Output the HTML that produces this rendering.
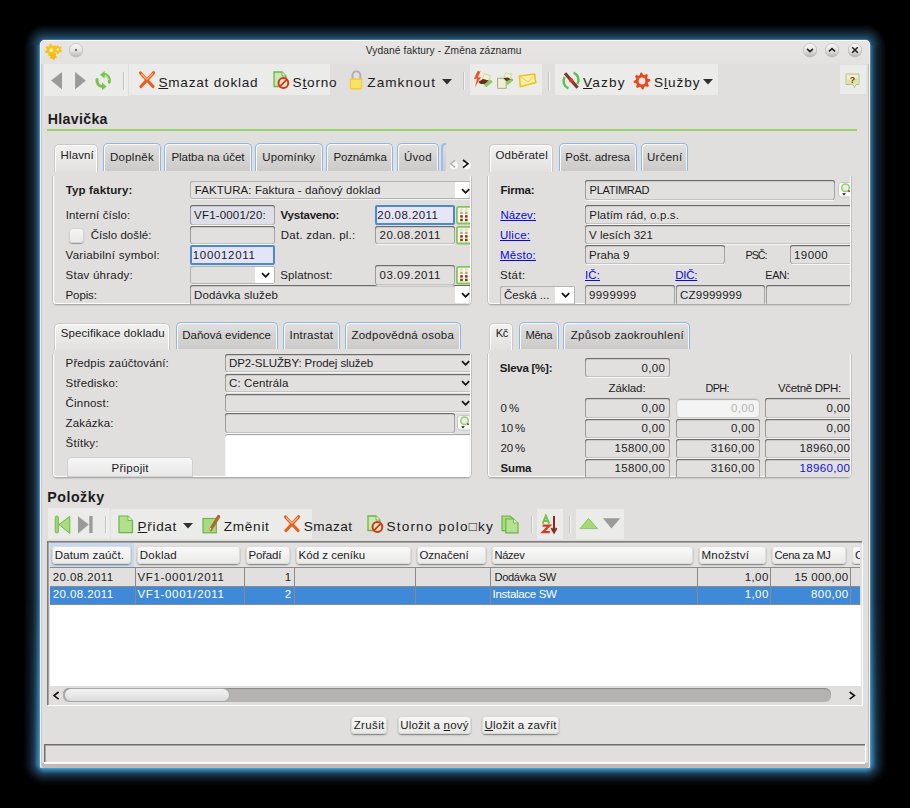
<!DOCTYPE html>
<html><head><meta charset="utf-8"><style>
html,body{margin:0;padding:0;}
body{width:910px;height:808px;background:#000;position:relative;overflow:hidden;font-family:"Liberation Sans",sans-serif;color:#1c1c1c;}
.t{position:absolute;white-space:nowrap;line-height:1;font-family:"Liberation Sans",sans-serif;}
.b{position:absolute;}
svg{position:absolute;overflow:visible;}
</style></head><body>

<div class="b" style="left:45px;top:24px;width:820px;height:16px;background:linear-gradient(to top,#28587a 0px, #1e4058 3px, #122838 7px, #0c1820 10px, #04060a 14px, #000 15.5px);"></div>
<div class="b" style="left:45px;top:768px;width:820px;height:18px;background:linear-gradient(to bottom,#4a9ac8 0px, #2e6a90 3px, #1a3a50 6px, #101c28 10px, #060a10 14px, #000 17.5px);"></div>
<div class="b" style="left:24px;top:45px;width:16px;height:718px;background:linear-gradient(to left,#3a82aa 0px, #2a6080 1.5px, #1c3a50 4px, #14202c 7px, #0d1520 10px, #05080c 14.5px, #000 16px);"></div>
<div class="b" style="left:24px;top:600px;width:16px;height:163px;background:linear-gradient(to left,#4a9ac8 0px, #2e6a90 3px, #1a3a50 6px, #101c28 10px, #060a10 14px, #000 17.5px);-webkit-mask-image:linear-gradient(transparent,#000);"></div>
<div class="b" style="left:870px;top:45px;width:16px;height:718px;background:linear-gradient(to right,#3a82aa 0px, #2a6080 1.5px, #1c3a50 4px, #14202c 7px, #0d1520 10px, #05080c 14.5px, #000 16px);"></div>
<div class="b" style="left:870px;top:600px;width:16px;height:163px;background:linear-gradient(to right,#4a9ac8 0px, #2e6a90 3px, #1a3a50 6px, #101c28 10px, #060a10 14px, #000 17.5px);-webkit-mask-image:linear-gradient(transparent,#000);"></div>
<div class="b" style="left:24px;top:24px;width:21px;height:21px;background:radial-gradient(circle 21px at 100% 100%,#28587a 5.0px, #1e4058 8.0px, #122838 12.0px, #0c1820 15.0px, #04060a 19.0px, #000 20.5px);"></div>
<div class="b" style="left:865px;top:24px;width:21px;height:21px;background:radial-gradient(circle 21px at 0% 100%,#28587a 5.0px, #1e4058 8.0px, #122838 12.0px, #0c1820 15.0px, #04060a 19.0px, #000 20.5px);"></div>
<div class="b" style="left:22px;top:763px;width:23px;height:23px;background:radial-gradient(circle 23px at 100% 0%,#4a9ac8 5.0px, #2e6a90 8.0px, #1a3a50 11.0px, #101c28 15.0px, #060a10 19.0px, #000 22.5px);"></div>
<div class="b" style="left:865px;top:763px;width:23px;height:23px;background:radial-gradient(circle 23px at 0% 0%,#4a9ac8 5.0px, #2e6a90 8.0px, #1a3a50 11.0px, #101c28 15.0px, #060a10 19.0px, #000 22.5px);"></div>
<div class="b" style="left:40px;top:40px;width:830px;height:728px;background:#e0dfde;border-radius:5px 5px 2px 2px;box-shadow:inset 0 1px 0 #fbfbfb, inset 1px 0 0 #f4f2f0, inset 2px 0 0 #cdc6c2, inset -1px 0 0 #f0eeec, inset -2px 0 0 #c8c0bc, 0 0 0.5px 1px rgba(80,160,210,.45);"></div>
<div class="b" style="left:42px;top:763px;width:826px;height:5px;background:#c2bab6;border-radius:0 0 2px 2px;"></div>
<div class="b" style="left:41px;top:41px;width:828px;height:23px;background:linear-gradient(#e6e5e3,#e3e2e0);border-radius:4px 4px 0 0;"></div>
<div class="t" style="left:365.70px;top:46px;font-size:10.2px;letter-spacing:0.111px;color:#2a2a2a;">Vydané faktury - Změna záznamu</div>
<div class="b" style="left:44px;top:64px;width:84px;height:32px;background:#ebebea;"></div>
<div class="b" style="left:129px;top:64px;width:201px;height:31px;background:#ebebea;"></div>
<div class="b" style="left:470px;top:64px;width:72px;height:31px;background:#ebebea;"></div>
<div class="b" style="left:555px;top:64px;width:163px;height:31px;background:#ebebea;"></div>
<div class="b" style="left:840px;top:65px;width:26px;height:29px;background:#ebebea;"></div>
<div class="b" style="left:123px;top:72px;width:1px;height:18px;background:#c4c3c2;box-shadow:1px 0 0 #f4f4f4;"></div>
<div class="b" style="left:463px;top:72px;width:1px;height:18px;background:#c4c3c2;box-shadow:1px 0 0 #f4f4f4;"></div>
<div class="b" style="left:548px;top:72px;width:1px;height:18px;background:#c4c3c2;box-shadow:1px 0 0 #f4f4f4;"></div>
<div class="t" style="left:158.40px;top:76px;font-size:13.6px;letter-spacing:0.778px;"><u>S</u>mazat doklad</div>
<div class="t" style="left:292.60px;top:76px;font-size:13.6px;letter-spacing:0.790px;">S<u>t</u>orno</div>
<div class="t" style="left:367.30px;top:76px;font-size:13.6px;letter-spacing:1.035px;">Zamknout</div>
<div class="t" style="left:583.00px;top:76px;font-size:13.6px;letter-spacing:1.203px;"><u>V</u>azby</div>
<div class="t" style="left:654.00px;top:76px;font-size:13.6px;letter-spacing:0.960px;">S<u>l</u>užby</div>
<div class="t" style="left:47.70px;top:112px;font-size:14.2px;font-weight:bold;letter-spacing:0.315px;">Hlavička</div>
<div class="b" style="left:47px;top:129px;width:810px;height:2px;background:#98d070;"></div>
<div class="b" style="left:53px;top:176px;width:418px;height:128px;border-radius:0 0 4px 4px;box-shadow:inset 1px 0 0 #fdfdfd, inset -1px 0 0 #fdfdfd, inset 0 -1px 0 #fdfdfd, -1px 0 0 #c2c1c0, 1px 0 0 #c2c1c0, 0 1px 0 #aeadac, 0 2px 1px rgba(0,0,0,.10);"></div>
<div class="b" style="left:54px;top:144px;width:44px;height:28px;background:linear-gradient(#f2f2f1,#e2e1e0);border:1px solid #c9c8c7;border-bottom:none;border-radius:5px 5px 0 0;box-shadow:inset 1px 1px 0 #fff,inset -1px 0 0 #fff;box-sizing:border-box;"></div>
<div class="t" style="left:60.50px;top:150px;font-size:11.5px;letter-spacing:0.139px;">Hlavní</div>
<div class="b" style="left:102.5px;top:142.5px;width:58.0px;height:28.5px;background:linear-gradient(#e2e1e0,#d6d5d4 45%,#cccbca);border:1.8px solid #88b8ec;border-bottom:none;border-radius:5px 5px 0 0;box-sizing:border-box;box-shadow:inset 1px 1px 0 #fafafa, inset -1px 0 0 #f4f4f4;"></div>
<div class="t" style="left:110.00px;top:152px;font-size:11.5px;letter-spacing:0.256px;">Doplněk</div>
<div class="b" style="left:163.5px;top:142.5px;width:88.0px;height:28.5px;background:linear-gradient(#e2e1e0,#d6d5d4 45%,#cccbca);border:1.8px solid #88b8ec;border-bottom:none;border-radius:5px 5px 0 0;box-sizing:border-box;box-shadow:inset 1px 1px 0 #fafafa, inset -1px 0 0 #f4f4f4;"></div>
<div class="t" style="left:171.40px;top:152px;font-size:11.5px;letter-spacing:-0.034px;">Platba na účet</div>
<div class="b" style="left:254.5px;top:142.5px;width:68.0px;height:28.5px;background:linear-gradient(#e2e1e0,#d6d5d4 45%,#cccbca);border:1.8px solid #88b8ec;border-bottom:none;border-radius:5px 5px 0 0;box-sizing:border-box;box-shadow:inset 1px 1px 0 #fafafa, inset -1px 0 0 #f4f4f4;"></div>
<div class="t" style="left:262.30px;top:152px;font-size:11.5px;letter-spacing:0.150px;">Upomínky</div>
<div class="b" style="left:325.5px;top:142.5px;width:67.0px;height:28.5px;background:linear-gradient(#e2e1e0,#d6d5d4 45%,#cccbca);border:1.8px solid #88b8ec;border-bottom:none;border-radius:5px 5px 0 0;box-sizing:border-box;box-shadow:inset 1px 1px 0 #fafafa, inset -1px 0 0 #f4f4f4;"></div>
<div class="t" style="left:333.40px;top:152px;font-size:11.5px;letter-spacing:-0.128px;">Poznámka</div>
<div class="b" style="left:396.5px;top:142.5px;width:42.0px;height:28.5px;background:linear-gradient(#e2e1e0,#d6d5d4 45%,#cccbca);border:1.8px solid #88b8ec;border-bottom:none;border-radius:5px 5px 0 0;box-sizing:border-box;box-shadow:inset 1px 1px 0 #fafafa, inset -1px 0 0 #f4f4f4;"></div>
<div class="t" style="left:404.00px;top:152px;font-size:11.5px;letter-spacing:0.282px;">Úvod</div>
<div class="b" style="left:441px;top:143px;width:5px;height:28px;background:linear-gradient(#dddcdb,#cfcecd);border-left:2px solid #94bfee;border-top:2px solid #94bfee;border-radius:4px 0 0 0;box-sizing:border-box;"></div>
<div class="t" style="left:65.70px;top:185px;font-size:11.5px;font-weight:bold;letter-spacing:0.157px;">Typ faktury:</div>
<div class="t" style="left:65.70px;top:210px;font-size:11.5px;letter-spacing:0.152px;">Interní číslo:</div>
<div class="t" style="left:90.70px;top:230px;font-size:11.5px;letter-spacing:0.056px;">Číslo došlé:</div>
<div class="t" style="left:65.60px;top:250px;font-size:11.5px;letter-spacing:0.251px;">Variabilní symbol:</div>
<div class="t" style="left:65.60px;top:270px;font-size:11.5px;letter-spacing:0.230px;">Stav úhrady:</div>
<div class="t" style="left:65.60px;top:290px;font-size:11.5px;letter-spacing:-0.140px;">Popis:</div>
<div class="t" style="left:280.60px;top:210px;font-size:11.5px;font-weight:bold;letter-spacing:-0.239px;">Vystaveno:</div>
<div class="t" style="left:280.80px;top:230px;font-size:11.5px;letter-spacing:0.247px;">Dat. zdan. pl.:</div>
<div class="t" style="left:280.20px;top:270px;font-size:11.5px;letter-spacing:0.120px;">Splatnost:</div>
<div class="b" style="left:190px;top:181px;width:280px;height:19px;overflow:hidden;"><div class="b" style="left:0;top:0;width:284px;height:18px;background:#e3e2e1;border-radius:3px;box-shadow:inset 0 0 0 1px #b4b3b2, inset 0 1px 0 #a0a09f, 0 1px 0 rgba(255,255,255,.6);"></div></div>
<div class="b" style="left:455px;top:182px;width:14px;height:16px;background:#fff;"></div>
<div class="t" style="left:194.70px;top:185px;font-size:11.5px;letter-spacing:0.091px;">FAKTURA: Faktura - daňový doklad</div>
<div class="b" style="left:190px;top:205px;width:85px;height:21px;overflow:hidden;"><div class="b" style="left:0;top:0;width:85px;height:20px;background:#dfdfea;border-radius:3px;box-shadow:inset 0 1px 0 #6c6c6c, inset 0 2px 0 rgba(0,0,0,.10), inset 1px 0 0 #9c9c9c, inset -1px 0 0 #a4a4a4, inset 0 -1px 0 #c4c4c4, 0 1px 0 rgba(255,255,255,.75);"></div></div>
<div class="t" style="left:194.10px;top:210px;font-size:11.5px;letter-spacing:0.169px;">VF1-0001/20:</div>
<div class="b" style="left:190px;top:226px;width:85px;height:19px;overflow:hidden;"><div class="b" style="left:0;top:0;width:85px;height:18px;background:#e1e0df;border-radius:3px;box-shadow:inset 0 1px 0 #6c6c6c, inset 0 2px 0 rgba(0,0,0,.10), inset 1px 0 0 #9c9c9c, inset -1px 0 0 #a4a4a4, inset 0 -1px 0 #c4c4c4, 0 1px 0 rgba(255,255,255,.75);"></div></div>
<div class="b" style="left:190px;top:245px;width:85px;height:20px;background:#e4e4f6;border:2px solid #4a8ad0;border-radius:2px;box-sizing:border-box;"></div>
<div class="t" style="left:192.80px;top:250px;font-size:11.5px;letter-spacing:0.663px;">100012011</div>
<div class="b" style="left:190px;top:266px;width:85px;height:19px;overflow:hidden;"><div class="b" style="left:0;top:0;width:85px;height:18px;background:#e1e0df;border-radius:3px;box-shadow:inset 0 0 0 1px #b4b3b2, inset 0 1px 0 #a0a09f, 0 1px 0 rgba(255,255,255,.6);"></div></div>
<div class="b" style="left:255px;top:267px;width:19px;height:16px;background:#fff;"></div>
<div class="b" style="left:190px;top:285px;width:280px;height:19px;overflow:hidden;"><div class="b" style="left:0;top:0;width:284px;height:22px;background:#e1e0df;border-radius:3px;box-shadow:inset 0 1px 0 #6c6c6c, inset 0 2px 0 rgba(0,0,0,.10), inset 1px 0 0 #9c9c9c, inset -1px 0 0 #a4a4a4, inset 0 -1px 0 #c4c4c4, 0 1px 0 rgba(255,255,255,.75);"></div></div>
<div class="b" style="left:455px;top:286px;width:14px;height:17px;background:#fff;"></div>
<div class="t" style="left:194.00px;top:290px;font-size:11.5px;letter-spacing:0.164px;">Dodávka služeb</div>
<div class="b" style="left:375px;top:205px;width:80px;height:20px;background:#e6e6f8;border:2px solid #4a8ad0;border-radius:2px;box-sizing:border-box;"></div>
<div class="t" style="left:377.30px;top:210px;font-size:11.5px;letter-spacing:0.445px;">20.08.2011</div>
<div class="b" style="left:375px;top:226px;width:80px;height:19px;overflow:hidden;"><div class="b" style="left:0;top:0;width:80px;height:18px;background:#e1e0df;border-radius:3px;box-shadow:inset 0 1px 0 #6c6c6c, inset 0 2px 0 rgba(0,0,0,.10), inset 1px 0 0 #9c9c9c, inset -1px 0 0 #a4a4a4, inset 0 -1px 0 #c4c4c4, 0 1px 0 rgba(255,255,255,.75);"></div></div>
<div class="t" style="left:379.60px;top:230px;font-size:11.5px;letter-spacing:0.445px;">20.08.2011</div>
<div class="b" style="left:375px;top:265px;width:80px;height:21px;overflow:hidden;"><div class="b" style="left:0;top:0;width:80px;height:20px;background:#e1e0df;border-radius:3px;box-shadow:inset 0 1px 0 #6c6c6c, inset 0 2px 0 rgba(0,0,0,.10), inset 1px 0 0 #9c9c9c, inset -1px 0 0 #a4a4a4, inset 0 -1px 0 #c4c4c4, 0 1px 0 rgba(255,255,255,.75);"></div></div>
<div class="t" style="left:379.60px;top:270px;font-size:11.5px;letter-spacing:0.445px;">03.09.2011</div>
<div class="b" style="left:69px;top:228px;width:15px;height:15px;background:linear-gradient(#f6f6f6,#e8e8e8);border-radius:4px;box-shadow:0 1px 1px rgba(0,0,0,.35), inset 0 0 0 1px #d4d4d4;"></div>
<div class="b" style="left:488px;top:176px;width:363px;height:128px;border-radius:0 0 4px 4px;box-shadow:inset 1px 0 0 #fdfdfd, inset -1px 0 0 #fdfdfd, inset 0 -1px 0 #fdfdfd, -1px 0 0 #c2c1c0, 1px 0 0 #c2c1c0, 0 1px 0 #aeadac, 0 2px 1px rgba(0,0,0,.10);"></div>
<div class="b" style="left:489px;top:144px;width:64px;height:28px;background:linear-gradient(#f2f2f1,#e2e1e0);border:1px solid #c9c8c7;border-bottom:none;border-radius:5px 5px 0 0;box-shadow:inset 1px 1px 0 #fff,inset -1px 0 0 #fff;box-sizing:border-box;"></div>
<div class="t" style="left:495.40px;top:150px;font-size:11.5px;letter-spacing:0.227px;">Odběratel</div>
<div class="b" style="left:558.5px;top:142.5px;width:78.0px;height:28.5px;background:linear-gradient(#e2e1e0,#d6d5d4 45%,#cccbca);border:1.8px solid #88b8ec;border-bottom:none;border-radius:5px 5px 0 0;box-sizing:border-box;box-shadow:inset 1px 1px 0 #fafafa, inset -1px 0 0 #f4f4f4;"></div>
<div class="t" style="left:565.30px;top:152px;font-size:11.5px;">Pošt. adresa</div>
<div class="b" style="left:640.5px;top:142.5px;width:47.0px;height:28.5px;background:linear-gradient(#e2e1e0,#d6d5d4 45%,#cccbca);border:1.8px solid #88b8ec;border-bottom:none;border-radius:5px 5px 0 0;box-sizing:border-box;box-shadow:inset 1px 1px 0 #fafafa, inset -1px 0 0 #f4f4f4;"></div>
<div class="t" style="left:647.00px;top:152px;font-size:11.5px;letter-spacing:0.267px;">Určení</div>
<div class="t" style="left:500.40px;top:185px;font-size:11.5px;font-weight:bold;letter-spacing:-0.206px;">Firma:</div>
<div class="t" style="left:500.40px;top:210px;font-size:11.5px;letter-spacing:-0.033px;color:#0a0ad8;"><u>Název:</u></div>
<div class="t" style="left:500.00px;top:230px;font-size:11.5px;letter-spacing:0.250px;color:#0a0ad8;"><u>Ulice:</u></div>
<div class="t" style="left:500.00px;top:250px;font-size:11.5px;letter-spacing:0.240px;color:#0a0ad8;"><u>Město:</u></div>
<div class="t" style="left:500.00px;top:270px;font-size:11.5px;letter-spacing:0.372px;">Stát:</div>
<div class="t" style="left:585.00px;top:270px;font-size:11.5px;letter-spacing:0.090px;color:#0a0ad8;"><u>IČ:</u></div>
<div class="t" style="left:675.30px;top:270px;font-size:11.5px;letter-spacing:-0.247px;color:#0a0ad8;"><u>DIČ:</u></div>
<div class="t" style="left:765.30px;top:270px;font-size:10.8px;letter-spacing:-0.339px;">EAN:</div>
<div class="t" style="left:745.50px;top:250px;font-size:10.8px;letter-spacing:-1.073px;">PSČ:</div>
<div class="b" style="left:585px;top:180px;width:250px;height:20.5px;overflow:hidden;"><div class="b" style="left:0;top:0;width:250px;height:19.5px;background:#e1e0df;border-radius:3px;box-shadow:inset 0 1px 0 #6c6c6c, inset 0 2px 0 rgba(0,0,0,.10), inset 1px 0 0 #9c9c9c, inset -1px 0 0 #a4a4a4, inset 0 -1px 0 #c4c4c4, 0 1px 0 rgba(255,255,255,.75);"></div></div>
<div class="t" style="left:589.60px;top:185px;font-size:11.1px;letter-spacing:-0.339px;">PLATIMRAD</div>
<div class="b" style="left:585px;top:205px;width:265px;height:20px;overflow:hidden;"><div class="b" style="left:0;top:0;width:269px;height:19px;background:#e1e0df;border-radius:3px;box-shadow:inset 0 1px 0 #6c6c6c, inset 0 2px 0 rgba(0,0,0,.10), inset 1px 0 0 #9c9c9c, inset -1px 0 0 #a4a4a4, inset 0 -1px 0 #c4c4c4, 0 1px 0 rgba(255,255,255,.75);"></div></div>
<div class="t" style="left:589.30px;top:210px;font-size:11.5px;letter-spacing:0.158px;">Platím rád, o.p.s.</div>
<div class="b" style="left:585px;top:225px;width:265px;height:20px;overflow:hidden;"><div class="b" style="left:0;top:0;width:269px;height:19px;background:#e1e0df;border-radius:3px;box-shadow:inset 0 1px 0 #6c6c6c, inset 0 2px 0 rgba(0,0,0,.10), inset 1px 0 0 #9c9c9c, inset -1px 0 0 #a4a4a4, inset 0 -1px 0 #c4c4c4, 0 1px 0 rgba(255,255,255,.75);"></div></div>
<div class="t" style="left:588.90px;top:230px;font-size:11.5px;letter-spacing:0.072px;">V lesích 321</div>
<div class="b" style="left:585px;top:245px;width:140px;height:20px;overflow:hidden;"><div class="b" style="left:0;top:0;width:140px;height:19px;background:#e1e0df;border-radius:3px;box-shadow:inset 0 1px 0 #6c6c6c, inset 0 2px 0 rgba(0,0,0,.10), inset 1px 0 0 #9c9c9c, inset -1px 0 0 #a4a4a4, inset 0 -1px 0 #c4c4c4, 0 1px 0 rgba(255,255,255,.75);"></div></div>
<div class="t" style="left:589.00px;top:250px;font-size:11.5px;letter-spacing:0.013px;">Praha 9</div>
<div class="b" style="left:790px;top:245px;width:60px;height:20px;overflow:hidden;"><div class="b" style="left:0;top:0;width:64px;height:19px;background:#e1e0df;border-radius:3px;box-shadow:inset 0 1px 0 #6c6c6c, inset 0 2px 0 rgba(0,0,0,.10), inset 1px 0 0 #9c9c9c, inset -1px 0 0 #a4a4a4, inset 0 -1px 0 #c4c4c4, 0 1px 0 rgba(255,255,255,.75);"></div></div>
<div class="t" style="left:794.00px;top:250px;font-size:11.5px;letter-spacing:0.434px;">19000</div>
<div class="b" style="left:500px;top:286px;width:75px;height:18px;overflow:hidden;"><div class="b" style="left:0;top:0;width:75px;height:21px;background:#e1e0df;border-radius:3px;box-shadow:inset 0 0 0 1px #b4b3b2, inset 0 1px 0 #a0a09f, 0 1px 0 rgba(255,255,255,.6);"></div></div>
<div class="b" style="left:555px;top:287px;width:19px;height:16px;background:#fff;"></div>
<div class="t" style="left:504.00px;top:290px;font-size:11.5px;">Česká ...</div>
<div class="b" style="left:585px;top:285px;width:90px;height:19px;overflow:hidden;"><div class="b" style="left:0;top:0;width:90px;height:22px;background:#e1e0df;border-radius:3px;box-shadow:inset 0 1px 0 #6c6c6c, inset 0 2px 0 rgba(0,0,0,.10), inset 1px 0 0 #9c9c9c, inset -1px 0 0 #a4a4a4, inset 0 -1px 0 #c4c4c4, 0 1px 0 rgba(255,255,255,.75);"></div></div>
<div class="t" style="left:589.00px;top:290px;font-size:11.5px;letter-spacing:0.405px;">9999999</div>
<div class="b" style="left:676px;top:285px;width:89px;height:19px;overflow:hidden;"><div class="b" style="left:0;top:0;width:89px;height:22px;background:#e1e0df;border-radius:3px;box-shadow:inset 0 1px 0 #6c6c6c, inset 0 2px 0 rgba(0,0,0,.10), inset 1px 0 0 #9c9c9c, inset -1px 0 0 #a4a4a4, inset 0 -1px 0 #c4c4c4, 0 1px 0 rgba(255,255,255,.75);"></div></div>
<div class="t" style="left:680.00px;top:290px;font-size:11.5px;letter-spacing:0.220px;">CZ9999999</div>
<div class="b" style="left:766px;top:285px;width:84px;height:19px;overflow:hidden;"><div class="b" style="left:0;top:0;width:88px;height:22px;background:#e1e0df;border-radius:3px;box-shadow:inset 0 1px 0 #6c6c6c, inset 0 2px 0 rgba(0,0,0,.10), inset 1px 0 0 #9c9c9c, inset -1px 0 0 #a4a4a4, inset 0 -1px 0 #c4c4c4, 0 1px 0 rgba(255,255,255,.75);"></div></div>
<div class="b" style="left:53px;top:354px;width:418px;height:123px;border-radius:0 0 4px 4px;box-shadow:inset 1px 0 0 #fdfdfd, inset -1px 0 0 #fdfdfd, inset 0 -1px 0 #fdfdfd, -1px 0 0 #c2c1c0, 1px 0 0 #c2c1c0, 0 1px 0 #aeadac, 0 2px 1px rgba(0,0,0,.10);"></div>
<div class="b" style="left:54px;top:323px;width:116px;height:27px;background:linear-gradient(#f2f2f1,#e2e1e0);border:1px solid #c9c8c7;border-bottom:none;border-radius:5px 5px 0 0;box-shadow:inset 1px 1px 0 #fff,inset -1px 0 0 #fff;box-sizing:border-box;"></div>
<div class="t" style="left:60.70px;top:328px;font-size:11.5px;letter-spacing:0.095px;">Specifikace dokladu</div>
<div class="b" style="left:175.5px;top:321.5px;width:102.0px;height:27.5px;background:linear-gradient(#e2e1e0,#d6d5d4 45%,#cccbca);border:1.8px solid #88b8ec;border-bottom:none;border-radius:5px 5px 0 0;box-sizing:border-box;box-shadow:inset 1px 1px 0 #fafafa, inset -1px 0 0 #f4f4f4;"></div>
<div class="t" style="left:182.30px;top:330px;font-size:11.5px;letter-spacing:-0.014px;">Daňová evidence</div>
<div class="b" style="left:282.5px;top:321.5px;width:57.0px;height:27.5px;background:linear-gradient(#e2e1e0,#d6d5d4 45%,#cccbca);border:1.8px solid #88b8ec;border-bottom:none;border-radius:5px 5px 0 0;box-sizing:border-box;box-shadow:inset 1px 1px 0 #fafafa, inset -1px 0 0 #f4f4f4;"></div>
<div class="t" style="left:289.50px;top:330px;font-size:11.5px;letter-spacing:0.241px;">Intrastat</div>
<div class="b" style="left:344.5px;top:321.5px;width:116.0px;height:27.5px;background:linear-gradient(#e2e1e0,#d6d5d4 45%,#cccbca);border:1.8px solid #88b8ec;border-bottom:none;border-radius:5px 5px 0 0;box-sizing:border-box;box-shadow:inset 1px 1px 0 #fafafa, inset -1px 0 0 #f4f4f4;"></div>
<div class="t" style="left:351.40px;top:330px;font-size:11.5px;letter-spacing:0.267px;">Zodpovědná osoba</div>
<div class="t" style="left:65.60px;top:358px;font-size:11.5px;letter-spacing:0.121px;">Předpis zaúčtování:</div>
<div class="t" style="left:65.60px;top:378px;font-size:11.5px;letter-spacing:0.156px;">Středisko:</div>
<div class="t" style="left:65.60px;top:398px;font-size:11.5px;letter-spacing:0.187px;">Činnost:</div>
<div class="t" style="left:65.60px;top:418px;font-size:11.5px;letter-spacing:0.168px;">Zakázka:</div>
<div class="t" style="left:65.60px;top:438px;font-size:11.5px;letter-spacing:0.139px;">Štítky:</div>
<div class="b" style="left:225px;top:354px;width:245px;height:19px;overflow:hidden;"><div class="b" style="left:0;top:0;width:249px;height:18px;background:#e1e0df;border-radius:3px;box-shadow:inset 0 1px 0 #6c6c6c, inset 0 2px 0 rgba(0,0,0,.10), inset 1px 0 0 #9c9c9c, inset -1px 0 0 #a4a4a4, inset 0 -1px 0 #c4c4c4, 0 1px 0 rgba(255,255,255,.75);"></div></div>
<div class="t" style="left:229.00px;top:358px;font-size:11.5px;letter-spacing:-0.091px;">DP2-SLUŽBY: Prodej služeb</div>
<div class="b" style="left:225px;top:374px;width:245px;height:19px;overflow:hidden;"><div class="b" style="left:0;top:0;width:249px;height:18px;background:#e1e0df;border-radius:3px;box-shadow:inset 0 1px 0 #6c6c6c, inset 0 2px 0 rgba(0,0,0,.10), inset 1px 0 0 #9c9c9c, inset -1px 0 0 #a4a4a4, inset 0 -1px 0 #c4c4c4, 0 1px 0 rgba(255,255,255,.75);"></div></div>
<div class="t" style="left:229.00px;top:378px;font-size:11.5px;letter-spacing:0.122px;">C: Centrála</div>
<div class="b" style="left:225px;top:394px;width:245px;height:19px;overflow:hidden;"><div class="b" style="left:0;top:0;width:249px;height:18px;background:#e1e0df;border-radius:3px;box-shadow:inset 0 1px 0 #6c6c6c, inset 0 2px 0 rgba(0,0,0,.10), inset 1px 0 0 #9c9c9c, inset -1px 0 0 #a4a4a4, inset 0 -1px 0 #c4c4c4, 0 1px 0 rgba(255,255,255,.75);"></div></div>
<div class="b" style="left:225px;top:413px;width:230px;height:21px;overflow:hidden;"><div class="b" style="left:0;top:0;width:230px;height:20px;background:#e1e0df;border-radius:3px;box-shadow:inset 0 1px 0 #6c6c6c, inset 0 2px 0 rgba(0,0,0,.10), inset 1px 0 0 #9c9c9c, inset -1px 0 0 #a4a4a4, inset 0 -1px 0 #c4c4c4, 0 1px 0 rgba(255,255,255,.75);"></div></div>
<div class="b" style="left:225px;top:434px;width:245px;height:42px;background:#fff;box-shadow:inset 0 1px 1px rgba(0,0,0,.4);border-radius:3px 0 0 0;"></div>
<div class="b" style="left:68px;top:458px;width:124px;height:18px;background:linear-gradient(#f6f6f6,#e8e8e8);border-radius:4px 4px 0 0;box-shadow:0 0 0 1px #cfcfcf;"></div>
<div class="t" style="left:111.50px;top:463px;font-size:11.5px;letter-spacing:0.267px;">Připojit</div>
<div class="b" style="left:488px;top:354px;width:363px;height:123px;border-radius:0 0 4px 4px;box-shadow:inset 1px 0 0 #fdfdfd, inset -1px 0 0 #fdfdfd, inset 0 -1px 0 #fdfdfd, -1px 0 0 #c2c1c0, 1px 0 0 #c2c1c0, 0 1px 0 #aeadac, 0 2px 1px rgba(0,0,0,.10);"></div>
<div class="b" style="left:489px;top:323px;width:24px;height:27px;background:linear-gradient(#f2f2f1,#e2e1e0);border:1px solid #c9c8c7;border-bottom:none;border-radius:5px 5px 0 0;box-shadow:inset 1px 1px 0 #fff,inset -1px 0 0 #fff;box-sizing:border-box;"></div>
<div class="t" style="left:495.70px;top:328px;font-size:11.3px;letter-spacing:-0.364px;">Kč</div>
<div class="b" style="left:518.5px;top:321.5px;width:40.0px;height:27.5px;background:linear-gradient(#e2e1e0,#d6d5d4 45%,#cccbca);border:1.8px solid #88b8ec;border-bottom:none;border-radius:5px 5px 0 0;box-sizing:border-box;box-shadow:inset 1px 1px 0 #fafafa, inset -1px 0 0 #f4f4f4;"></div>
<div class="t" style="left:525.50px;top:330px;font-size:11.2px;letter-spacing:-0.352px;">Měna</div>
<div class="b" style="left:562.5px;top:321.5px;width:127.0px;height:27.5px;background:linear-gradient(#e2e1e0,#d6d5d4 45%,#cccbca);border:1.8px solid #88b8ec;border-bottom:none;border-radius:5px 5px 0 0;box-sizing:border-box;box-shadow:inset 1px 1px 0 #fafafa, inset -1px 0 0 #f4f4f4;"></div>
<div class="t" style="left:570.70px;top:330px;font-size:11.5px;letter-spacing:0.305px;">Způsob zaokrouhlení</div>
<div class="t" style="left:499.80px;top:363px;font-size:11.5px;font-weight:bold;letter-spacing:-0.252px;">Sleva [%]:</div>
<div class="b" style="left:585px;top:358px;width:85px;height:20px;overflow:hidden;"><div class="b" style="left:0;top:0;width:85px;height:19px;background:#e1e0df;border-radius:3px;box-shadow:inset 0 1px 0 #6c6c6c, inset 0 2px 0 rgba(0,0,0,.10), inset 1px 0 0 #9c9c9c, inset -1px 0 0 #a4a4a4, inset 0 -1px 0 #c4c4c4, 0 1px 0 rgba(255,255,255,.75);"></div></div>
<div class="t" style="left:641.41px;top:363px;font-size:11.5px;letter-spacing:0.406px;">0,00</div>
<div class="t" style="left:608.60px;top:383px;font-size:11.5px;letter-spacing:-0.120px;">Základ:</div>
<div class="t" style="left:705.50px;top:383px;font-size:10.8px;letter-spacing:-0.571px;">DPH:</div>
<div class="t" style="left:778.00px;top:383px;font-size:11.5px;letter-spacing:-0.317px;">Včetně DPH:</div>
<div class="t" style="left:500.60px;top:403px;font-size:11.5px;letter-spacing:-0.159px;">0 %</div>
<div class="t" style="left:500.60px;top:423px;font-size:11.5px;letter-spacing:-0.233px;">10 %</div>
<div class="t" style="left:500.60px;top:443px;font-size:11.5px;letter-spacing:-0.233px;">20 %</div>
<div class="t" style="left:500.60px;top:463px;font-size:11.5px;font-weight:bold;letter-spacing:-0.175px;">Suma</div>
<div class="b" style="left:585px;top:398px;width:85px;height:21px;overflow:hidden;"><div class="b" style="left:0;top:0;width:85px;height:20px;background:#e1e0df;border-radius:3px;box-shadow:inset 0 1px 0 #6c6c6c, inset 0 2px 0 rgba(0,0,0,.10), inset 1px 0 0 #9c9c9c, inset -1px 0 0 #a4a4a4, inset 0 -1px 0 #c4c4c4, 0 1px 0 rgba(255,255,255,.75);"></div></div>
<div class="b" style="left:676px;top:398px;width:84px;height:20px;background:#f4f4f4;border-radius:4px;box-shadow:inset 0 1px 1px rgba(0,0,0,.3);border:1px solid #d0d0d0;box-sizing:border-box;"></div>
<div class="b" style="left:765px;top:398px;width:85px;height:21px;overflow:hidden;"><div class="b" style="left:0;top:0;width:89px;height:20px;background:#e1e0df;border-radius:3px;box-shadow:inset 0 1px 0 #6c6c6c, inset 0 2px 0 rgba(0,0,0,.10), inset 1px 0 0 #9c9c9c, inset -1px 0 0 #a4a4a4, inset 0 -1px 0 #c4c4c4, 0 1px 0 rgba(255,255,255,.75);"></div></div>
<div class="t" style="left:641.41px;top:403px;font-size:11.5px;letter-spacing:0.406px;">0,00</div>
<div class="t" style="left:730.91px;top:403px;font-size:11.5px;letter-spacing:0.406px;color:#b4b4b4;">0,00</div>
<div class="t" style="left:826.41px;top:403px;font-size:11.5px;letter-spacing:0.406px;">0,00</div>
<div class="b" style="left:585px;top:419px;width:85px;height:20px;overflow:hidden;"><div class="b" style="left:0;top:0;width:85px;height:19px;background:#e1e0df;border-radius:3px;box-shadow:inset 0 1px 0 #6c6c6c, inset 0 2px 0 rgba(0,0,0,.10), inset 1px 0 0 #9c9c9c, inset -1px 0 0 #a4a4a4, inset 0 -1px 0 #c4c4c4, 0 1px 0 rgba(255,255,255,.75);"></div></div>
<div class="b" style="left:676px;top:419px;width:84px;height:20px;overflow:hidden;"><div class="b" style="left:0;top:0;width:84px;height:19px;background:#e1e0df;border-radius:3px;box-shadow:inset 0 1px 0 #6c6c6c, inset 0 2px 0 rgba(0,0,0,.10), inset 1px 0 0 #9c9c9c, inset -1px 0 0 #a4a4a4, inset 0 -1px 0 #c4c4c4, 0 1px 0 rgba(255,255,255,.75);"></div></div>
<div class="b" style="left:765px;top:419px;width:85px;height:20px;overflow:hidden;"><div class="b" style="left:0;top:0;width:89px;height:19px;background:#e1e0df;border-radius:3px;box-shadow:inset 0 1px 0 #6c6c6c, inset 0 2px 0 rgba(0,0,0,.10), inset 1px 0 0 #9c9c9c, inset -1px 0 0 #a4a4a4, inset 0 -1px 0 #c4c4c4, 0 1px 0 rgba(255,255,255,.75);"></div></div>
<div class="t" style="left:641.41px;top:423px;font-size:11.5px;letter-spacing:0.406px;">0,00</div>
<div class="t" style="left:730.91px;top:423px;font-size:11.5px;letter-spacing:0.406px;">0,00</div>
<div class="t" style="left:826.41px;top:423px;font-size:11.5px;letter-spacing:0.406px;">0,00</div>
<div class="b" style="left:585px;top:439px;width:85px;height:20px;overflow:hidden;"><div class="b" style="left:0;top:0;width:85px;height:19px;background:#e1e0df;border-radius:3px;box-shadow:inset 0 1px 0 #6c6c6c, inset 0 2px 0 rgba(0,0,0,.10), inset 1px 0 0 #9c9c9c, inset -1px 0 0 #a4a4a4, inset 0 -1px 0 #c4c4c4, 0 1px 0 rgba(255,255,255,.75);"></div></div>
<div class="b" style="left:676px;top:439px;width:84px;height:20px;overflow:hidden;"><div class="b" style="left:0;top:0;width:84px;height:19px;background:#e1e0df;border-radius:3px;box-shadow:inset 0 1px 0 #6c6c6c, inset 0 2px 0 rgba(0,0,0,.10), inset 1px 0 0 #9c9c9c, inset -1px 0 0 #a4a4a4, inset 0 -1px 0 #c4c4c4, 0 1px 0 rgba(255,255,255,.75);"></div></div>
<div class="b" style="left:765px;top:439px;width:85px;height:20px;overflow:hidden;"><div class="b" style="left:0;top:0;width:89px;height:19px;background:#e1e0df;border-radius:3px;box-shadow:inset 0 1px 0 #6c6c6c, inset 0 2px 0 rgba(0,0,0,.10), inset 1px 0 0 #9c9c9c, inset -1px 0 0 #a4a4a4, inset 0 -1px 0 #c4c4c4, 0 1px 0 rgba(255,255,255,.75);"></div></div>
<div class="t" style="left:614.44px;top:443px;font-size:11.5px;letter-spacing:0.372px;">15800,00</div>
<div class="t" style="left:710.67px;top:443px;font-size:11.5px;letter-spacing:0.376px;">3160,00</div>
<div class="t" style="left:799.44px;top:443px;font-size:11.5px;letter-spacing:0.372px;">18960,00</div>
<div class="b" style="left:585px;top:459px;width:85px;height:18px;overflow:hidden;"><div class="b" style="left:0;top:0;width:85px;height:21px;background:#e1e0df;border-radius:3px;box-shadow:inset 0 1px 0 #6c6c6c, inset 0 2px 0 rgba(0,0,0,.10), inset 1px 0 0 #9c9c9c, inset -1px 0 0 #a4a4a4, inset 0 -1px 0 #c4c4c4, 0 1px 0 rgba(255,255,255,.75);"></div></div>
<div class="b" style="left:676px;top:459px;width:84px;height:18px;overflow:hidden;"><div class="b" style="left:0;top:0;width:84px;height:21px;background:#e1e0df;border-radius:3px;box-shadow:inset 0 1px 0 #6c6c6c, inset 0 2px 0 rgba(0,0,0,.10), inset 1px 0 0 #9c9c9c, inset -1px 0 0 #a4a4a4, inset 0 -1px 0 #c4c4c4, 0 1px 0 rgba(255,255,255,.75);"></div></div>
<div class="b" style="left:765px;top:459px;width:85px;height:18px;overflow:hidden;"><div class="b" style="left:0;top:0;width:89px;height:21px;background:#e1e0df;border-radius:3px;box-shadow:inset 0 1px 0 #6c6c6c, inset 0 2px 0 rgba(0,0,0,.10), inset 1px 0 0 #9c9c9c, inset -1px 0 0 #a4a4a4, inset 0 -1px 0 #c4c4c4, 0 1px 0 rgba(255,255,255,.75);"></div></div>
<div class="t" style="left:614.44px;top:463px;font-size:11.5px;letter-spacing:0.372px;">15800,00</div>
<div class="t" style="left:710.67px;top:463px;font-size:11.5px;letter-spacing:0.376px;">3160,00</div>
<div class="t" style="left:799.44px;top:463px;font-size:11.5px;letter-spacing:0.372px;color:#1010e0;">18960,00</div>
<div class="t" style="left:47.30px;top:490px;font-size:14.2px;font-weight:bold;letter-spacing:0.521px;">Položky</div>
<div class="b" style="left:48px;top:508px;width:62px;height:31px;background:#ebebea;"></div>
<div class="b" style="left:111px;top:509px;width:201px;height:30px;background:#ebebea;"></div>
<div class="b" style="left:537px;top:509px;width:26px;height:30px;background:#ebebea;"></div>
<div class="b" style="left:576px;top:509px;width:48px;height:30px;background:#ebebea;"></div>
<div class="b" style="left:105px;top:516px;width:1px;height:17px;background:#c4c3c2;box-shadow:1px 0 0 #f4f4f4;"></div>
<div class="b" style="left:531px;top:516px;width:1px;height:17px;background:#c4c3c2;box-shadow:1px 0 0 #f4f4f4;"></div>
<div class="b" style="left:569px;top:516px;width:1px;height:17px;background:#c4c3c2;box-shadow:1px 0 0 #f4f4f4;"></div>
<div class="t" style="left:137.60px;top:520px;font-size:13.6px;letter-spacing:0.641px;"><u>P</u>řidat</div>
<div class="t" style="left:223.80px;top:520px;font-size:13.6px;letter-spacing:0.710px;">Změnit</div>
<div class="t" style="left:303.70px;top:520px;font-size:13.6px;letter-spacing:0.439px;">Smazat</div>
<div class="t" style="left:386.60px;top:520px;font-size:13.6px;letter-spacing:1.139px;">Storno polo□ky</div>
<div class="b" style="left:47px;top:541px;width:815px;height:164px;background:#e0dfde;box-shadow:inset 1px 1px 0 #7c7b7a, inset 2px 2px 0 #a4a3a2, 1px 1px 0 #fff;"></div>
<div class="b" style="left:49px;top:543px;width:812px;height:24px;background:#e3e2e1;"></div>
<div class="b" style="left:50px;top:543px;width:84px;height:24px;background:#c8daee;"></div>
<div class="b" style="left:52px;top:546px;width:79px;height:18px;background:linear-gradient(#fafafa,#e9e9e8);border-radius:4px;box-shadow:0 1px 1.5px rgba(0,0,0,.45), inset 0 0 0 1px #dcdcdc;"></div>
<div class="t" style="left:54.70px;top:550px;font-size:11.5px;letter-spacing:0.142px;">Datum zaúčt.</div>
<div class="b" style="left:137px;top:546px;width:103px;height:18px;background:linear-gradient(#fafafa,#e9e9e8);border-radius:4px;box-shadow:0 1px 1.5px rgba(0,0,0,.45), inset 0 0 0 1px #dcdcdc;"></div>
<div class="t" style="left:139.80px;top:550px;font-size:11.5px;letter-spacing:0.224px;">Doklad</div>
<div class="b" style="left:246px;top:546px;width:44px;height:18px;background:linear-gradient(#fafafa,#e9e9e8);border-radius:4px;box-shadow:0 1px 1.5px rgba(0,0,0,.45), inset 0 0 0 1px #dcdcdc;"></div>
<div class="t" style="left:248.60px;top:550px;font-size:11.5px;letter-spacing:-0.214px;">Pořadí</div>
<div class="b" style="left:296px;top:546px;width:115px;height:18px;background:linear-gradient(#fafafa,#e9e9e8);border-radius:4px;box-shadow:0 1px 1.5px rgba(0,0,0,.45), inset 0 0 0 1px #dcdcdc;"></div>
<div class="t" style="left:298.60px;top:550px;font-size:11.5px;">Kód z ceníku</div>
<div class="b" style="left:417px;top:546px;width:69px;height:18px;background:linear-gradient(#fafafa,#e9e9e8);border-radius:4px;box-shadow:0 1px 1.5px rgba(0,0,0,.45), inset 0 0 0 1px #dcdcdc;"></div>
<div class="t" style="left:419.40px;top:550px;font-size:11.5px;">Označení</div>
<div class="b" style="left:492px;top:546px;width:201px;height:18px;background:linear-gradient(#fafafa,#e9e9e8);border-radius:4px;box-shadow:0 1px 1.5px rgba(0,0,0,.45), inset 0 0 0 1px #dcdcdc;"></div>
<div class="t" style="left:494.50px;top:550px;font-size:11.1px;letter-spacing:-0.317px;">Název</div>
<div class="b" style="left:699px;top:546px;width:67px;height:18px;background:linear-gradient(#fafafa,#e9e9e8);border-radius:4px;box-shadow:0 1px 1.5px rgba(0,0,0,.45), inset 0 0 0 1px #dcdcdc;"></div>
<div class="t" style="left:701.50px;top:550px;font-size:11.5px;letter-spacing:0.200px;">Množství</div>
<div class="b" style="left:772px;top:546px;width:74px;height:18px;background:linear-gradient(#fafafa,#e9e9e8);border-radius:4px;box-shadow:0 1px 1.5px rgba(0,0,0,.45), inset 0 0 0 1px #dcdcdc;"></div>
<div class="t" style="left:774.60px;top:550px;font-size:11.1px;letter-spacing:-0.324px;">Cena za MJ</div>
<div class="b" style="left:852px;top:546px;width:8px;height:19px;overflow:hidden;"><div class="b" style="left:0;top:0;width:30px;height:18px;background:linear-gradient(#fafafa,#e9e9e8);border-radius:4px;box-shadow:0 1px 1.5px rgba(0,0,0,.45), inset 0 0 0 1px #dcdcdc;"></div><div class="t" style="left:3.00px;top:4px;font-size:11.5px;">C</div></div>
<div class="b" style="left:50px;top:568px;width:810px;height:18px;background:#e1e0df;"></div>
<div class="b" style="left:50px;top:567px;width:810px;height:1px;background:#8a8a8a;"></div>
<div class="b" style="left:50px;top:586px;width:810px;height:1px;background:#8a8a8a;"></div>
<div class="b" style="left:50px;top:587px;width:810px;height:17px;background:#3f8ad8;"></div>
<div class="b" style="left:50px;top:604px;width:810px;height:1px;background:#8a8a8a;"></div>
<div class="b" style="left:50px;top:605px;width:811px;height:81px;background:#fff;"></div>
<div class="b" style="left:135px;top:568px;width:1px;height:36px;background:#8a8a8a;"></div>
<div class="b" style="left:244px;top:568px;width:1px;height:36px;background:#8a8a8a;"></div>
<div class="b" style="left:294px;top:568px;width:1px;height:36px;background:#8a8a8a;"></div>
<div class="b" style="left:415px;top:568px;width:1px;height:36px;background:#8a8a8a;"></div>
<div class="b" style="left:490px;top:568px;width:1px;height:36px;background:#8a8a8a;"></div>
<div class="b" style="left:697px;top:568px;width:1px;height:36px;background:#8a8a8a;"></div>
<div class="b" style="left:770px;top:568px;width:1px;height:36px;background:#8a8a8a;"></div>
<div class="b" style="left:850px;top:568px;width:1px;height:36px;background:#8a8a8a;"></div>
<div class="t" style="left:52.70px;top:572px;font-size:11.5px;letter-spacing:0.423px;">20.08.2011</div>
<div class="t" style="left:137.40px;top:572px;font-size:11.5px;letter-spacing:0.672px;">VF1-0001/2011</div>
<div class="t" style="left:284.67px;top:572px;font-size:11.5px;">1</div>
<div class="t" style="left:494.50px;top:572px;font-size:11.1px;letter-spacing:-0.341px;">Dodávka SW</div>
<div class="t" style="left:744.71px;top:572px;font-size:11.5px;letter-spacing:0.406px;">1,00</div>
<div class="t" style="left:794.40px;top:572px;font-size:11.5px;letter-spacing:0.328px;">15 000,00</div>
<div class="t" style="left:52.70px;top:589px;font-size:11.5px;letter-spacing:0.423px;color:#ffffff;">20.08.2011</div>
<div class="t" style="left:137.40px;top:589px;font-size:11.5px;letter-spacing:0.672px;color:#ffffff;">VF1-0001/2011</div>
<div class="t" style="left:284.67px;top:589px;font-size:11.5px;color:#ffffff;">2</div>
<div class="t" style="left:492.60px;top:589px;font-size:11.5px;letter-spacing:-0.312px;color:#ffffff;">Instalace SW</div>
<div class="t" style="left:744.71px;top:589px;font-size:11.5px;letter-spacing:0.406px;color:#ffffff;">1,00</div>
<div class="t" style="left:811.10px;top:589px;font-size:11.5px;letter-spacing:0.382px;color:#ffffff;">800,00</div>
<div class="b" style="left:50px;top:686px;width:811px;height:18px;background:#e0dfde;"></div>
<div class="b" style="left:63px;top:688px;width:768px;height:14px;background:#b4b3b2;border-radius:6px;box-shadow:inset 0 1px 1px rgba(0,0,0,.25);"></div>
<div class="b" style="left:65px;top:689px;width:164px;height:12px;background:linear-gradient(#f2f2f2,#dcdcdc);border-radius:6px;box-shadow:0 0 0 1px #a8a8a8;"></div>
<div class="b" style="left:351px;top:716px;width:36px;height:18px;background:linear-gradient(#f8f8f8,#e6e6e5);border-radius:4px;box-shadow:0 1px 1.5px rgba(0,0,0,.45), inset 0 0 0 1px #d8d8d8;"></div>
<div class="t" style="left:353.70px;top:720px;font-size:11.5px;letter-spacing:0.370px;">Zrušit</div>
<div class="b" style="left:398px;top:716px;width:73px;height:18px;background:linear-gradient(#f8f8f8,#e6e6e5);border-radius:4px;box-shadow:0 1px 1.5px rgba(0,0,0,.45), inset 0 0 0 1px #d8d8d8;"></div>
<div class="t" style="left:400.20px;top:720px;font-size:11.5px;letter-spacing:0.205px;">Uložit a <u>n</u>ový</div>
<div class="b" style="left:482px;top:716px;width:77px;height:18px;background:linear-gradient(#f8f8f8,#e6e6e5);border-radius:4px;box-shadow:0 1px 1.5px rgba(0,0,0,.45), inset 0 0 0 1px #d8d8d8;"></div>
<div class="t" style="left:484.60px;top:720px;font-size:11.5px;letter-spacing:0.155px;"><u>U</u>ložit a zavřít</div>
<div class="b" style="left:44px;top:744px;width:821px;height:18px;background:#e0dfde;box-shadow:inset 1px 1px 0 #6e6d6c, inset 2px 2px 0 #a8a7a6, 0 1px 0 #fff, 1px 0 0 #fff, 0 2px 0 #f6f6f6;"></div>
<svg style="left:44px;top:42px" width="20" height="19" viewBox="0 0 20 19"><path d="M13.60 8.20 L13.44 9.62 L11.34 10.20 L10.80 11.07 L11.19 13.20 L9.98 13.97 L8.22 12.68 L7.20 12.80 L5.78 14.44 L4.42 13.97 L4.33 11.80 L3.60 11.07 L1.43 10.98 L0.96 9.62 L2.60 8.20 L2.72 7.18 L1.43 5.42 L2.20 4.21 L4.33 4.60 L5.20 4.06 L5.78 1.96 L7.20 1.80 L8.22 3.72 L9.20 4.06 L11.19 3.20 L12.20 4.21 L11.34 6.20 L11.68 7.18Z" fill="#f8c414"/><path d="M18.00 8.90 L17.52 9.94 L15.97 9.95 L15.29 10.43 L14.78 11.89 L13.63 12.00 L12.85 10.66 L12.10 10.31 L10.57 10.59 L9.91 9.65 L10.68 8.31 L10.60 7.48 L9.60 6.30 L10.08 5.26 L11.63 5.25 L12.31 4.77 L12.82 3.31 L13.97 3.20 L14.75 4.54 L15.50 4.89 L17.03 4.61 L17.69 5.55 L16.92 6.89 L17.00 7.72Z" fill="#f8c414"/><path d="M12.92 14.95 L12.60 15.89 L11.22 15.99 L10.69 16.45 L10.41 17.80 L9.43 17.99 L8.66 16.85 L8.00 16.62 L6.68 17.05 L6.03 16.30 L6.64 15.06 L6.51 14.37 L5.48 13.45 L5.80 12.51 L7.18 12.41 L7.71 11.95 L7.99 10.60 L8.97 10.41 L9.74 11.55 L10.40 11.78 L11.72 11.35 L12.37 12.10 L11.76 13.34 L11.89 14.03Z" fill="#f6b80c"/><circle cx="7.2" cy="8.2" r="2" fill="#fdf0b0"/><circle cx="13.8" cy="7.6" r="1.3" fill="#fdf0b0"/></svg>
<svg style="left:68px;top:42px" width="16" height="16" viewBox="0 0 16 16"><defs><linearGradient id="cg" x1="0" y1="0" x2="0" y2="1"><stop offset="0" stop-color="#f8f8f8"/><stop offset=".55" stop-color="#e4e3e2"/><stop offset="1" stop-color="#b8b7b6"/></linearGradient></defs>
<circle cx="8" cy="8.4" r="7" fill="#a8a7a6" opacity=".6"/><circle cx="8" cy="8" r="6.6" fill="url(#cg)" stroke="#bdbcbb" stroke-width="0.6"/><circle cx="8" cy="8" r="0.9" fill="#333"/></svg>
<svg style="left:802px;top:42px" width="16" height="16" viewBox="0 0 16 16"><circle cx="8" cy="8.4" r="7" fill="#a8a7a6" opacity=".6"/><circle cx="8" cy="8" r="6.6" fill="url(#cg)" stroke="#bdbcbb" stroke-width="0.6"/><path d="M5 6.8 L8 9.6 L11 6.8" fill="none" stroke="#222" stroke-width="1.6"/></svg>
<svg style="left:824px;top:42px" width="16" height="16" viewBox="0 0 16 16"><circle cx="8" cy="8.4" r="7" fill="#a8a7a6" opacity=".6"/><circle cx="8" cy="8" r="6.6" fill="url(#cg)" stroke="#bdbcbb" stroke-width="0.6"/><path d="M5 9.4 L8 6.6 L11 9.4" fill="none" stroke="#222" stroke-width="1.6"/></svg>
<svg style="left:847px;top:42px" width="16" height="16" viewBox="0 0 16 16"><circle cx="8" cy="8.4" r="7" fill="#a8a7a6" opacity=".6"/><circle cx="8" cy="8" r="6.6" fill="url(#cg)" stroke="#bdbcbb" stroke-width="0.6"/><path d="M5.2 5.2 L10.8 10.8 M10.8 5.2 L5.2 10.8" fill="none" stroke="#222" stroke-width="1.6"/></svg>
<svg style="left:50px;top:71px" width="14" height="20" viewBox="0 0 14 20"><path d="M1.1 9.4 L12 1 L12 18.4 Z" fill="#9a9a9a"/></svg>
<svg style="left:74px;top:71px" width="14" height="20" viewBox="0 0 14 20"><path d="M1.1 1 L11.8 9.4 L1.1 18.4 Z" fill="#9a9a9a"/></svg>
<svg style="left:92px;top:68px" width="24" height="24" viewBox="0 0 24 24"><g fill="none" stroke="#78c44c" stroke-width="3" stroke-linecap="round"><path d="M12.3 6.3 A6.3 6.3 0 0 1 17.3 14.1"/><path d="M5.0 11.4 A6.3 6.3 0 0 0 10.6 18.8"/></g><path d="M8 6.8 L12.6 3 L12.6 10.6Z" fill="#78c44c"/><path d="M14.6 18.4 L10 14.6 L10 22.2Z" fill="#78c44c"/><path d="M13 7 A5.6 5.6 0 0 1 16.6 12" fill="none" stroke="#c6eaa8" stroke-width="1"/></svg>
<svg style="left:138px;top:71px" width="18" height="18" viewBox="0 0 18 18"><path d="M2.5 2 L15 15.5 M15.5 1.8 L3 15.5" stroke="#e5621e" stroke-width="3.2" stroke-linecap="round"/>
<path d="M3.5 2.8 L8.6 8.2 M14.6 2.6 L9.6 7.8" stroke="#f6b8a0" stroke-width="1.1" stroke-linecap="round"/></svg>
<svg style="left:283px;top:515px" width="18" height="18" viewBox="0 0 18 18"><path d="M2.5 2 L15 15.5 M15.5 1.8 L3 15.5" stroke="#e5621e" stroke-width="3.2" stroke-linecap="round"/>
<path d="M3.5 2.8 L8.6 8.2 M14.6 2.6 L9.6 7.8" stroke="#f6b8a0" stroke-width="1.1" stroke-linecap="round"/></svg>
<svg style="left:273px;top:71px" width="17" height="18" viewBox="0 0 17 18"><path d="M1 1 L9 1 L13 5 L13 15.5 L1 15.5 Z" fill="#c8eab0" stroke="#6cb44a" stroke-width="1.3"/>
<path d="M9 1 L9 5 L13 5" fill="#e8f6dc" stroke="#6cb44a" stroke-width="1"/>
<circle cx="10.4" cy="12" r="4.9" fill="#d6f2c4" stroke="#e0301c" stroke-width="2"/>
<path d="M7 15.4 L13.8 8.6" stroke="#e0301c" stroke-width="1.9"/></svg>
<svg style="left:367px;top:515px" width="17" height="18" viewBox="0 0 17 18"><path d="M1 1 L9 1 L13 5 L13 15.5 L1 15.5 Z" fill="#c8eab0" stroke="#6cb44a" stroke-width="1.3"/>
<path d="M9 1 L9 5 L13 5" fill="#e8f6dc" stroke="#6cb44a" stroke-width="1"/>
<circle cx="10.4" cy="12" r="4.9" fill="#d6f2c4" stroke="#e0301c" stroke-width="2"/>
<path d="M7 15.4 L13.8 8.6" stroke="#e0301c" stroke-width="1.9"/></svg>
<svg style="left:349px;top:70px" width="15" height="21" viewBox="0 0 15 21"><path d="M3.5 9 L3.5 5.5 A3.9 4.2 0 0 1 11.3 5.5 L11.3 9" fill="none" stroke="#b0b0b0" stroke-width="2"/>
<rect x="0.8" y="8.6" width="12.4" height="11" rx="1" fill="#f6cc2c"/><rect x="2" y="10" width="10" height="8" fill="#fbe36a"/></svg>
<svg style="left:441.5px;top:79px" width="10" height="6" viewBox="0 0 10 6"><path d="M0 0 L10 0 L5 5.4 Z" fill="#303030"/></svg>
<svg style="left:703px;top:79px" width="10" height="6" viewBox="0 0 10 6"><path d="M0 0 L10 0 L5 5.4 Z" fill="#303030"/></svg>
<svg style="left:183px;top:523px" width="10" height="6" viewBox="0 0 10 6"><path d="M0 0 L10 0 L5 5.4 Z" fill="#303030"/></svg>
<svg style="left:470px;top:66px" width="70" height="26" viewBox="0 0 70 26">
<path d="M7.6 5 L3.8 13.2 L7 12.6 L5 21 L11 11 L7.8 11.4 L10.6 5.6Z" fill="#ee5420"/>
<path d="M14.2 7.7 L20.4 9.6 L18.5 15 L12.3 13.5Z" fill="#eef2cc" stroke="#c8c89c" stroke-width=".7"/>
<path d="M8.5 15.8 L13 13 L18.8 14.6 L15 18 L10 18Z" fill="#6a2e24"/>
<path d="M14.2 18.5 L20.4 14.2 L22.3 15.8 L16.2 20.8Z" fill="#8ed060" stroke="#64b040" stroke-width=".6"/>
<path d="M6.2 19.2 L10 17.3 L12.7 20.4 L9.2 22Z" fill="#eef2cc"/>
<path d="M35.8 6.9 L42 8 L40 12.7 L33.8 11.5Z" fill="#eef2cc" stroke="#c8c89c" stroke-width=".7"/>
<path d="M32.3 12.3 L37.7 11.5 L41.5 13.5 L36.2 15.4Z" fill="#6a2e24"/>
<path d="M36.2 15.8 L42 12.7 L43 14.2 L37.7 18.5Z" fill="#8ed060" stroke="#64b040" stroke-width=".6"/>
<path d="M27.6 12.3 L33 12.3 L36.2 15 L36.2 22.3 L27.6 22.3Z" fill="#eef0d4" stroke="#a8a888" stroke-width="1"/>
<path d="M49.4 10 L64.6 8 L65.8 16.5 L50.4 20.8Z" fill="#f6eeaa" stroke="#f0c21c" stroke-width="1.6" stroke-linejoin="round"/>
<path d="M50 10.6 L58 16 L64.8 8.6" fill="none" stroke="#eec030" stroke-width=".8"/></svg>
<svg style="left:562px;top:71px" width="18" height="19" viewBox="0 0 18 19"><path d="M2.6 6 A8 8 0 0 0 6.4 17.4" fill="none" stroke="#5cc050" stroke-width="2.4"/><path d="M15.4 13 A8 8 0 0 0 11.6 1.6" fill="none" stroke="#5cc050" stroke-width="2.4"/><path d="M3 2.2 L15.6 16.8" stroke="#7a3a30" stroke-width="3.2"/><circle cx="9.2" cy="9.4" r="2.1" fill="#e83020"/></svg>
<svg style="left:633px;top:71.5px" width="18" height="18" viewBox="0 0 18 18"><path d="M17.24 7.36 L17.40 9.00 L15.08 10.21 L14.73 11.37 L15.98 13.67 L14.94 14.94 L12.44 14.16 L11.37 14.73 L10.64 17.24 L9.00 17.40 L7.79 15.08 L6.63 14.73 L4.33 15.98 L3.06 14.94 L3.84 12.44 L3.27 11.37 L0.76 10.64 L0.60 9.00 L2.92 7.79 L3.27 6.63 L2.02 4.33 L3.06 3.06 L5.56 3.84 L6.63 3.27 L7.36 0.76 L9.00 0.60 L10.21 2.92 L11.37 3.27 L13.67 2.02 L14.94 3.06 L14.16 5.56 L14.73 6.63Z" fill="#e84a1c"/><circle cx="9" cy="9" r="3.4" fill="#e8e8e8"/></svg>
<svg style="left:845px;top:73px" width="15" height="16" viewBox="0 0 15 16"><path d="M1 1 L14 1 L14 11.5 L11 11.5 L9.5 14.5 L8 11.5 L1 11.5Z" fill="#eef0c8" stroke="#b8bc98" stroke-width="1"/>
<path d="M1.5 7 L13.5 5 L13.5 11 L1.5 11Z" fill="#d8e4a8"/>
<text x="7.5" y="10" font-family="Liberation Sans" font-size="9" font-weight="bold" fill="#9a2a2a" text-anchor="middle">?</text></svg>
<div class="b" style="left:456px;top:206px;width:14px;height:19px;overflow:hidden;"><svg style="left:0px;top:0px" width="18" height="19" viewBox="0 0 18 19"><rect x="0.9" y="0.9" width="16" height="16.6" rx="1.5" fill="#f4f8dc" stroke="#86c45e" stroke-width="1.8"/>
<g fill="#86342a"><rect x="4.2" y="9.2" width="2.6" height="2.4"/><rect x="9" y="9.2" width="2.6" height="2.4"/><rect x="4.2" y="12.8" width="2.6" height="2.4"/><rect x="9" y="12.8" width="2.6" height="2.4"/></g>
<g fill="#e4d0d0"><rect x="4.2" y="2.6" width="2.6" height="2"/><rect x="9" y="2.6" width="2.6" height="2"/></g>
<g fill="#c8a0a0"><rect x="4.2" y="5.8" width="2.6" height="2.2"/><rect x="9" y="5.8" width="2.6" height="2.2"/></g></svg></div>
<div class="b" style="left:456px;top:226px;width:14px;height:19px;overflow:hidden;"><svg style="left:0px;top:0px" width="18" height="19" viewBox="0 0 18 19"><rect x="0.9" y="0.9" width="16" height="16.6" rx="1.5" fill="#f4f8dc" stroke="#86c45e" stroke-width="1.8"/>
<g fill="#86342a"><rect x="4.2" y="9.2" width="2.6" height="2.4"/><rect x="9" y="9.2" width="2.6" height="2.4"/><rect x="4.2" y="12.8" width="2.6" height="2.4"/><rect x="9" y="12.8" width="2.6" height="2.4"/></g>
<g fill="#e4d0d0"><rect x="4.2" y="2.6" width="2.6" height="2"/><rect x="9" y="2.6" width="2.6" height="2"/></g>
<g fill="#c8a0a0"><rect x="4.2" y="5.8" width="2.6" height="2.2"/><rect x="9" y="5.8" width="2.6" height="2.2"/></g></svg></div>
<div class="b" style="left:456px;top:266px;width:14px;height:19px;overflow:hidden;"><svg style="left:0px;top:0px" width="18" height="19" viewBox="0 0 18 19"><rect x="0.9" y="0.9" width="16" height="16.6" rx="1.5" fill="#f4f8dc" stroke="#86c45e" stroke-width="1.8"/>
<g fill="#86342a"><rect x="4.2" y="9.2" width="2.6" height="2.4"/><rect x="9" y="9.2" width="2.6" height="2.4"/><rect x="4.2" y="12.8" width="2.6" height="2.4"/><rect x="9" y="12.8" width="2.6" height="2.4"/></g>
<g fill="#e4d0d0"><rect x="4.2" y="2.6" width="2.6" height="2"/><rect x="9" y="2.6" width="2.6" height="2"/></g>
<g fill="#c8a0a0"><rect x="4.2" y="5.8" width="2.6" height="2.2"/><rect x="9" y="5.8" width="2.6" height="2.2"/></g></svg></div>
<div class="b" style="left:838px;top:182px;width:12px;height:17px;overflow:hidden;"><svg style="left:0px;top:0px" width="16" height="16" viewBox="0 0 16 16"><rect x="0.5" y="0.5" width="14" height="14.5" rx="3" fill="#fafafa" stroke="#c8c8c8" stroke-width="1"/>
<circle cx="7.5" cy="5.8" r="3.8" fill="#ececec" stroke="#8ed46a" stroke-width="1.5"/>
<path d="M10.4 8.4 L11.6 9.8" stroke="#8a2a20" stroke-width="1.5"/>
<path d="M4.2 11.2 L7.8 11.2 L6 13.4Z" fill="#111"/></svg></div>
<div class="b" style="left:457px;top:415px;width:13px;height:17px;overflow:hidden;"><svg style="left:0px;top:0px" width="16" height="16" viewBox="0 0 16 16"><rect x="0.5" y="0.5" width="14" height="14.5" rx="3" fill="#fafafa" stroke="#c8c8c8" stroke-width="1"/>
<circle cx="7.5" cy="5.8" r="3.8" fill="#ececec" stroke="#8ed46a" stroke-width="1.5"/>
<path d="M10.4 8.4 L11.6 9.8" stroke="#8a2a20" stroke-width="1.5"/>
<path d="M4.2 11.2 L7.8 11.2 L6 13.4Z" fill="#111"/></svg></div>
<svg style="left:460.5px;top:187.5px" width="10" height="7" viewBox="0 0 10 7"><path d="M1 1.2 L4.6 4.8 L8.2 1.2" fill="none" stroke="#111" stroke-width="1.8"/></svg>
<svg style="left:260.5px;top:271.5px" width="10" height="7" viewBox="0 0 10 7"><path d="M1 1.2 L4.6 4.8 L8.2 1.2" fill="none" stroke="#111" stroke-width="1.8"/></svg>
<svg style="left:460.5px;top:291.5px" width="10" height="7" viewBox="0 0 10 7"><path d="M1 1.2 L4.6 4.8 L8.2 1.2" fill="none" stroke="#111" stroke-width="1.8"/></svg>
<svg style="left:560.5px;top:291.5px" width="10" height="7" viewBox="0 0 10 7"><path d="M1 1.2 L4.6 4.8 L8.2 1.2" fill="none" stroke="#111" stroke-width="1.8"/></svg>
<svg style="left:461px;top:360px" width="10" height="7" viewBox="0 0 10 7"><path d="M1 1.2 L4.6 4.8 L8.2 1.2" fill="none" stroke="#111" stroke-width="1.8"/></svg>
<svg style="left:461px;top:380px" width="10" height="7" viewBox="0 0 10 7"><path d="M1 1.2 L4.6 4.8 L8.2 1.2" fill="none" stroke="#111" stroke-width="1.8"/></svg>
<svg style="left:461px;top:400px" width="10" height="7" viewBox="0 0 10 7"><path d="M1 1.2 L4.6 4.8 L8.2 1.2" fill="none" stroke="#111" stroke-width="1.8"/></svg>
<svg style="left:448px;top:159px" width="12" height="12" viewBox="0 0 12 12"><circle cx="6" cy="6.4" r="4.6" fill="#f8f8f8" stroke="#cfcfcf" stroke-width=".6"/><path d="M7 1.2 L2.8 4.8 L7 8.4" fill="none" stroke="#b0b0b0" stroke-width="1.5"/></svg>
<svg style="left:461px;top:159px" width="12" height="12" viewBox="0 0 12 12"><circle cx="6" cy="6.4" r="4.6" fill="#f8f8f8" stroke="#cfcfcf" stroke-width=".6"/><path d="M2 1 L7 4.8 L2 8.6" fill="none" stroke="#111" stroke-width="1.6"/></svg>
<svg style="left:54px;top:515px" width="18" height="20" viewBox="0 0 18 20"><rect x="1.2" y="1" width="3.3" height="17" rx="1.5" fill="#9ed672" stroke="#6cb040" stroke-width=".8"/>
<path d="M5 9.6 L15.8 1.3 L15.8 18.4Z" fill="#a8dc7c" stroke="#6cb040" stroke-width=".9" stroke-linejoin="round"/></svg>
<svg style="left:77px;top:515px" width="18" height="20" viewBox="0 0 18 20"><path d="M1 1.3 L11.7 9.6 L1 18.4Z" fill="#9a9a9a"/><rect x="12.3" y="1" width="3.3" height="17" fill="#9a9a9a"/></svg>
<svg style="left:118px;top:515px" width="16" height="19" viewBox="0 0 16 19"><path d="M1 1 L10 1 L14.5 5.5 L14.5 17.6 L1 17.6Z" fill="#b0e08c" stroke="#6cb444" stroke-width="1.2"/>
<path d="M10 1 L10 5.5 L14.5 5.5" fill="#e4f6d4" stroke="#6cb444" stroke-width=".9"/></svg>
<svg style="left:202px;top:515px" width="18" height="19" viewBox="0 0 18 19"><rect x="1" y="3.5" width="13.3" height="14.3" fill="#a8dc80" stroke="#6cb444" stroke-width="1.2"/>
<path d="M16.6 1.6 L8.6 14.6" stroke="#b06a30" stroke-width="3.4" stroke-linecap="round"/>
<path d="M9.4 13.4 L7.2 16.6 L7.8 12.6Z" fill="#f0e0c0"/></svg>
<svg style="left:501px;top:515px" width="19" height="19" viewBox="0 0 19 19"><path d="M1 1 L9 1 L13.4 5 L13.4 15.6 L1 15.6Z" fill="#a8dc80" stroke="#6cb444" stroke-width="1.2"/>
<path d="M4.8 4 L12.6 4 L17 8 L17 17.8 L4.8 17.8Z" fill="#b4e290" stroke="#6cb444" stroke-width="1.2"/>
<path d="M12.6 4 L12.6 8 L17 8" fill="#e4f6d4" stroke="#6cb444" stroke-width=".9"/></svg>
<svg style="left:541px;top:515px" width="18" height="19" viewBox="0 0 18 19"><path d="M1.6 8.6 L4.9 0.8 L8.2 8.6 M2.9 6 L6.9 6" fill="none" stroke="#74c04a" stroke-width="2"/><path d="M1.6 10.6 L8.6 10.6 L1.8 17.2 L8.8 17.2" fill="none" stroke="#d63c1c" stroke-width="2.2"/><path d="M13 1 L13 16" stroke="#8a2a22" stroke-width="2"/><path d="M10.4 13 L13 17.6 L15.6 13" fill="none" stroke="#8a2a22" stroke-width="1.8"/></svg>
<svg style="left:579px;top:517px" width="20" height="13" viewBox="0 0 20 13"><path d="M1 11.6 L9.6 1.3 L18.4 11.6Z" fill="#a4da78" stroke="#7cc050" stroke-width=".8" stroke-linejoin="round"/></svg>
<svg style="left:602px;top:517px" width="20" height="13" viewBox="0 0 20 13"><path d="M1 1.3 L18.3 1.3 L9.4 11.6Z" fill="#9a9a9a"/></svg>
<svg style="left:52px;top:691px" width="9" height="10" viewBox="0 0 9 10"><path d="M6.6 1 L2 4.6 L6.6 8.2" fill="none" stroke="#111" stroke-width="1.6"/></svg>
<svg style="left:848px;top:691px" width="9" height="10" viewBox="0 0 9 10"><path d="M1.6 1 L6.4 4.6 L1.6 8.2" fill="none" stroke="#111" stroke-width="1.6"/></svg>
</body></html>
